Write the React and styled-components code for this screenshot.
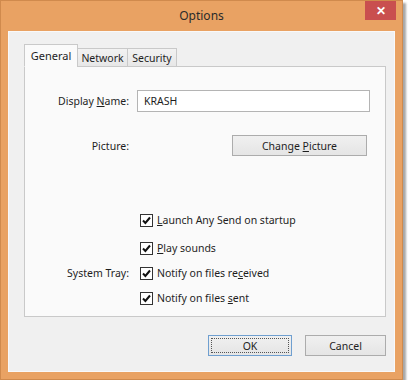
import React, { useState } from 'react';
import styled, { createGlobalStyle } from 'styled-components';

const GlobalStyle = createGlobalStyle`
  html, body {
    margin: 0;
    padding: 0;
    background: #ffffff;
  }
  body {
    font-family: "Noto Sans", "Open Sans", sans-serif;
    font-size: 10.5px;
    color: #1e1e1e;
  }
`;

// Window frame
const Window = styled.div`
  width: 403px;
  height: 380px;
  box-sizing: border-box;
  background: #e9a263;
  border: 1px solid #d08a4d;
  padding: 0 7px 7px 7px;
  display: flex;
  flex-direction: column;
  box-shadow: 3px 3px 2px rgba(60, 60, 60, 0.45);
`;

const TitleBar = styled.div`
  height: 30px;
  display: grid;
  grid-template-columns: 1fr auto 1fr;
  align-items: start;
`;

const Title = styled.div`
  grid-column: 2;
  font-size: 12px;
  color: #2b2b2b;
  line-height: 30px;
`;

const CloseButton = styled.div`
  grid-column: 3;
  justify-self: end;
  width: 31px;
  height: 19px;
  margin-right: -1px;
  background: #c94f4f;
  color: #ffffff;
  font-size: 12px;
  font-weight: bold;
  display: flex;
  align-items: center;
  justify-content: center;
`;

const Client = styled.div`
  flex: 1;
  background: #f0f0f0;
  border: 1px solid #f9f9f9;
  padding: 12px 8px 0 15px;
  display: flex;
  flex-direction: column;
`;

const TabStrip = styled.div`
  display: flex;
  align-items: flex-end;
  height: 23px;
  position: relative;
  z-index: 1;
  margin-bottom: -1px;
`;

const Tab = styled.div`
  box-sizing: border-box;
  width: ${(p) => p.$w}px;
  height: ${(p) => (p.$active ? 23 : 19)}px;
  border: 1px solid #c9c9c9;
  border-bottom: ${(p) => (p.$active ? '1px solid #fafafa' : '1px solid #c9c9c9')};
  background: ${(p) => (p.$active ? '#fafafa' : 'linear-gradient(#f2f2f2, #e7e7e7)')};
  margin-left: ${(p) => (p.$overlap ? -1 : 0)}px;
  font-size: ${(p) => (p.$active ? 11 : 10.5)}px;
  display: flex;
  align-items: ${(p) => (p.$active ? 'flex-start' : 'center')};
  padding-top: ${(p) => (p.$active ? 3 : 0)}px;
  justify-content: center;
  color: #1e1e1e;
`;

const Panel = styled.div`
  height: 251px;
  box-sizing: border-box;
  background: #fafafa;
  border: 1px solid #c9c9c9;
  padding: 23px 15px 0 0;
  display: grid;
  grid-template-columns: 104px 1fr;
  column-gap: 8px;
  align-content: start;
`;

const Label = styled.div`
  text-align: right;
  align-self: center;
  margin-top: ${(p) => p.$mt || 0}px;
`;

const TextBox = styled.div`
  height: 22px;
  box-sizing: border-box;
  border: 1px solid #b4b4b4;
  background: #ffffff;
  padding: 0 6px;
  display: flex;
  align-items: center;
`;

const Button = styled.div`
  box-sizing: border-box;
  width: ${(p) => p.$w}px;
  height: 21px;
  border: 1px solid ${(p) => (p.$focused ? '#6f9fd0' : '#acacac')};
  background: linear-gradient(#f0f0f0, #e5e5e5);
  display: flex;
  align-items: center;
  justify-content: center;
  position: relative;
  justify-self: ${(p) => p.$justify || 'auto'};
  margin-top: ${(p) => p.$mt || 0}px;
  margin-right: ${(p) => p.$mr || 0}px;
`;

const FocusRing = styled.div`
  position: absolute;
  inset: 2px;
  border: 1px dotted #555;
`;

const CheckRow = styled.div`
  grid-column: 2;
  display: flex;
  align-items: center;
  gap: 4px;
  height: 16px;
  margin-left: 3px;
  margin-top: ${(p) => p.$mt || 0}px;
`;

const Box = styled.div`
  width: 13px;
  height: 13px;
  box-sizing: border-box;
  border: 1px solid #333;
  background: #ffffff;
  display: flex;
  align-items: center;
  justify-content: center;
`;

const TrayLabel = styled(Label)`
  grid-column: 1;
  grid-row: 5;
`;

const ButtonRow = styled.div`
  display: flex;
  justify-content: flex-end;
  gap: 13px;
  padding-top: 18px;
`;

const U = styled.span`
  text-decoration: underline;
  text-underline-offset: 1px;
`;

function Check({ children, mt, row }) {
  const [checked, setChecked] = useState(true);
  return (
    <CheckRow $mt={mt} style={{ gridRow: row }} onClick={() => setChecked(!checked)}>
      <Box>
        {checked && (
          <svg width="9" height="9" viewBox="0 0 9 9">
            <path d="M1 4.5 L3.4 7 L8 1.5" fill="none" stroke="#111" strokeWidth="2" />
          </svg>
        )}
      </Box>
      <span>{children}</span>
    </CheckRow>
  );
}

export default function App() {
  const [name] = useState('KRASH');

  return (
    <>
      <GlobalStyle />
      <Window>
        <TitleBar>
          <Title>Options</Title>
          <CloseButton>✕</CloseButton>
        </TitleBar>
        <Client>
          <TabStrip>
            <Tab $w={54} $active>General</Tab>
            <Tab $w={51} $overlap>Network</Tab>
            <Tab $w={50} $overlap>Security</Tab>
          </TabStrip>
          <Panel>
            <Label>Display <U>N</U>ame:</Label>
            <TextBox>{name}</TextBox>

            <Label $mt={23}>Picture:</Label>
            <Button $w={135} $justify="end" $mr={3} $mt={23}>
              <span>Change <U>P</U>icture</span>
            </Button>

            <Check mt={56} row={3}><U>L</U>aunch Any Send on startup</Check>
            <Check mt={12} row={4}><U>P</U>lay sounds</Check>
            <TrayLabel $mt={9}>System Tray:</TrayLabel>
            <Check mt={9} row={5}>Notify on files re<U>c</U>eived</Check>
            <Check mt={9} row={6}>Notify on files <U>s</U>ent</Check>
          </Panel>
          <ButtonRow>
            <Button $w={84} $focused>
              <FocusRing />
              OK
            </Button>
            <Button $w={81}>Cancel</Button>
          </ButtonRow>
        </Client>
      </Window>
    </>
  );
}
